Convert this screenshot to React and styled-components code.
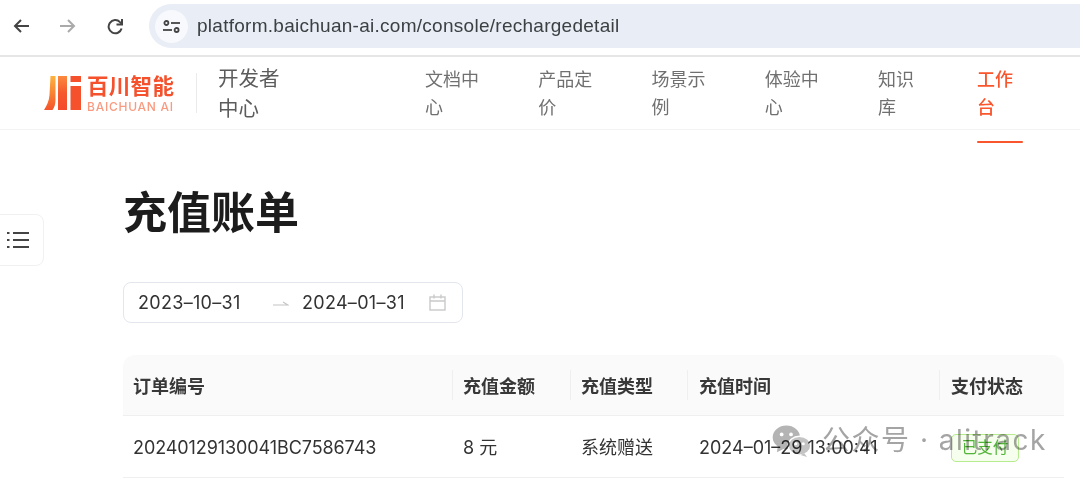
import React from "react";
import styled, { createGlobalStyle } from "styled-components";

const CJK = `"Inter", "Noto Sans CJK SC", sans-serif`;

const Global = createGlobalStyle`
  html, body { margin: 0; padding: 0; background: #fff; }
  body { font-family: ${CJK}; width: 1080px; height: 482px; overflow: hidden; }
  * { box-sizing: border-box; }
`;

const Page = styled.div`
  position: relative;
  width: 1080px;
  height: 482px;
  overflow: hidden;
`;

const BrowserBar = styled.div`
  height: 57px;
  display: flex;
  align-items: flex-start;
  padding: 4px 0 0 13px;
  border-bottom: 2px solid #e6e6e6;
`;

const BrowserButtons = styled.div`
  display: flex;
  gap: 31px;
  align-items: center;
  height: 44px;
  width: 136px;
`;

const UrlPill = styled.div`
  flex: 1;
  height: 44px;
  background: #e8edf6;
  border-radius: 22px 0 0 22px;
  display: flex;
  align-items: center;
  padding-left: 6px;
  gap: 9px;
`;

const SiteIcon = styled.div`
  width: 33px;
  height: 33px;
  border-radius: 50%;
  background: #f7f9fc;
  display: flex;
  align-items: center;
  justify-content: center;
`;

const UrlText = styled.span`
  font-family: "Liberation Sans", sans-serif;
  font-size: 19px;
  color: #3c4043;
  letter-spacing: 0.27px;
`;

const Nav = styled.nav`
  height: 73px;
  display: flex;
  align-items: center;
  padding-left: 44px;
  border-bottom: 1px solid #f3f3f3;
`;

const Brand = styled.div`
  display: flex;
  align-items: center;
  gap: 6px;
  width: 153px;
  height: 40px;
  border-right: 1px solid #ebebeb;
`;

const BrandText = styled.div`
  display: flex;
  flex-direction: column;
  align-items: flex-start;
`;

const BrandCn = styled.span`
  font-family: "Noto Sans CJK SC", sans-serif;
  font-size: 21.5px;
  font-weight: 700;
  line-height: 22px;
  letter-spacing: 0.3px;
  color: #f4512c;
`;

const BrandEn = styled.span`
  margin-top: 4px;
  font-family: "Inter", sans-serif;
  font-size: 12px;
  font-weight: 500;
  line-height: 13px;
  letter-spacing: 0.75px;
  color: #f89b80;
  white-space: nowrap;
`;

const DevCenter = styled.div`
  width: 64px;
  margin: 0 143px 2px 21px;
  font-family: "Noto Sans CJK SC", sans-serif;
  font-size: 20.5px;
  line-height: 30px;
  color: #5c5c5c;
`;

const NavItem = styled.a`
  position: relative;
  display: block;
  width: ${(p) => p.$text}px;
  margin-right: ${(p) => p.$gap}px;
  margin-bottom: 2px;
  font-family: "Noto Sans CJK SC", sans-serif;
  font-size: 18px;
  line-height: 28px;
  color: ${(p) => (p.$active ? "#f9562e" : "#707070")};
  font-weight: ${(p) => (p.$active ? 500 : 400)};
  ${(p) =>
    p.$active &&
    `&::after {
      content: "";
      position: absolute;
      left: 0;
      top: 77px;
      width: 46px;
      height: 2px;
      border-radius: 1px;
      background: #f9562e;
    }`}
`;

const SideToggle = styled.div`
  position: absolute;
  left: -8px;
  top: 214px;
  width: 52px;
  height: 52px;
  background: #fff;
  border: 1px solid #f1f1f1;
  border-radius: 8px;
  display: flex;
  align-items: center;
  justify-content: center;
`;

const Main = styled.main`
  padding: 47px 16px 0 123px;
`;

const Title = styled.h1`
  margin: 0;
  font-family: "Noto Sans CJK SC", sans-serif;
  font-size: 44px;
  line-height: 66px;
  font-weight: 700;
  color: #1c1c1c;
`;

const DatePicker = styled.div`
  margin-top: 39px;
  width: 340px;
  height: 41px;
  border: 1px solid #e4e6ee;
  border-radius: 8px;
  display: flex;
  align-items: center;
  padding: 0 15px 0 14px;
`;

const DateText = styled.span`
  width: ${(p) => p.$w}px;
  font-size: 18px;
  letter-spacing: 0.3px;
  color: #333;
  white-space: nowrap;
`;

const Arrow = styled.span`
  width: 29px;
  display: flex;
  margin-left: 31px;
  margin-top: 3px;
`;

const Table = styled.div`
  margin-top: 32px;
  width: 941px;
`;

const Row = styled.div`
  display: grid;
  grid-template-columns: 329px 118px 117px 252px 125px;
  align-items: center;
  height: ${(p) => p.$h}px;
  background: ${(p) => (p.$head ? "#fafafa" : "#fff")};
  border-bottom: 1px solid #efefef;
  border-radius: ${(p) => (p.$head ? "12px 12px 0 0" : "0")};
`;

const HeadCell = styled.div`
  position: relative;
  padding-left: ${(p) => p.$pad}px;
  font-family: "Noto Sans CJK SC", sans-serif;
  font-size: 18px;
  font-weight: 700;
  color: #383838;
  line-height: 28px;
  margin-bottom: 1px;
  &::before {
    content: ${(p) => (p.$first ? "none" : '""')};
    position: absolute;
    left: 0;
    top: -1px;
    height: 30px;
    width: 1px;
    background: #efefef;
  }
`;

const Cell = styled.div`
  padding-left: ${(p) => p.$pad}px;
  margin-top: 2px;
  font-size: 18px;
  letter-spacing: ${(p) => p.$ls || 0}px;
  color: #333;
  line-height: 28px;
  white-space: nowrap;
`;

const Badge = styled.span`
  display: inline-flex;
  align-items: center;
  justify-content: center;
  width: 68px;
  height: 28px;
  margin-top: 1px;
  background: #f6ffed;
  border: 1px solid #b7eb8f;
  border-radius: 5px;
  font-size: 15.5px;
  letter-spacing: 0;
  color: #52b53a;
`;

const Watermark = styled.div`
  position: absolute;
  left: 772px;
  top: 418px;
  display: flex;
  align-items: center;
  gap: 10px;
  height: 40px;
  color: #a4a4a4;
  white-space: nowrap;
  pointer-events: none;
  mix-blend-mode: multiply;
`;

const WatermarkText = styled.span`
  font-family: "Inter", "Noto Sans CJK SC", sans-serif;
  font-size: 28px;
  font-weight: 400;
  letter-spacing: 1.5px;
`;

const WeChatMark = styled.svg`
  margin-top: 6px;
`;

const Back = () => (
  <svg width="16" height="14" viewBox="0 0 16 14" fill="none" stroke="#444" strokeWidth="2">
    <path d="M16 7H2M8 1L2 7l6 6" />
  </svg>
);
const Forward = () => (
  <svg width="16" height="14" viewBox="0 0 16 14" fill="none" stroke="#aaa" strokeWidth="2">
    <path d="M0 7h14M8 1l6 6-6 6" />
  </svg>
);
const Reload = () => (
  <svg width="16" height="17" viewBox="0 0 16 17" fill="none" stroke="#444" strokeWidth="2">
    <path d="M14.6 10.5A6.6 6.6 0 1 1 13 4.1L15 6" />
    <path d="M15 1v5.5H9.5" />
  </svg>
);
const Tune = () => (
  <svg width="17" height="13" viewBox="0 0 17 13" fill="none" stroke="#444" strokeWidth="1.8">
    <circle cx="3.4" cy="3" r="2" />
    <path d="M8 3h9" />
    <circle cx="13.6" cy="10" r="2" />
    <path d="M0 10h9" />
  </svg>
);
const Mark = () => (
  <svg width="37" height="34" viewBox="0 0 37 34">
    <defs>
      <linearGradient id="mk" x1="0" y1="0" x2="0" y2="1">
        <stop offset="0" stopColor="#fdb33f" />
        <stop offset="1" stopColor="#f5532a" />
      </linearGradient>
      <linearGradient id="mk2" x1="0" y1="0" x2="0" y2="1">
        <stop offset="0" stopColor="#fb8a3e" />
        <stop offset="0.5" stopColor="#f5582c" />
        <stop offset="1" stopColor="#f4492a" />
      </linearGradient>
    </defs>
    <path d="M6.5 0h5v24c0 4-1 7-3 10H0c3-5 5-9 5.500-15z" fill="url(#mk)" />
    <path d="M14 0h9v34h-9z" fill="url(#mk2)" />
    <path d="M26.500 0H37v6H26.500zM26.500 10H37v24H26.500z" fill="#f4512c" />
  </svg>
);
const ListIcon = () => (
  <svg width="22" height="18" viewBox="0 0 22 18" fill="none" stroke="#444" strokeWidth="2">
    <path d="M6 2h16M6 9h16M6 16h16" />
    <path d="M0 2h2.5M0 9h2.5M0 16h2.5" />
  </svg>
);
const RangeArrow = () => (
  <svg width="16" height="8" viewBox="0 0 16 8" fill="none" stroke="#c4c4c4" strokeWidth="1.2">
    <path d="M0 5h15L10 2" />
  </svg>
);
const Calendar = () => (
  <svg width="17" height="17" viewBox="0 0 17 17" fill="none" stroke="#c9c9c9" strokeWidth="1.4">
    <rect x="1" y="3" width="15" height="13" />
    <path d="M1 7h15M5 0.5v4M12 0.5v4" />
  </svg>
);
const WeChat = () => (
  <WeChatMark width="40" height="32" viewBox="0 0 42 34">
    <ellipse cx="15" cy="13" rx="14.5" ry="12.500" fill="#b4b4b4" />
    <path d="M6 22l-1 7 8-4z" fill="#b4b4b4" />
    <ellipse cx="29" cy="22" rx="12" ry="10" fill="#c4c4c4" stroke="#fff" strokeWidth="1.5" />
    <path d="M34 30l3 4-7-2z" fill="#c4c4c4" />
    <circle cx="10" cy="10" r="2" fill="#fff" />
    <circle cx="20" cy="10" r="2" fill="#fff" />
    <circle cx="25" cy="20" r="1.6" fill="#fff" />
    <circle cx="33" cy="20" r="1.6" fill="#fff" />
  </WeChatMark>
);

const navItems = [
  ["文档中心", 54, 59.25],
  ["产品定价", 54, 59.25],
  ["场景示例", 54, 59.25],
  ["体验中心", 54, 59.25],
  ["知识库", 36, 63],
];

export default function App() {
  return (
    <Page>
      <Global />
      <BrowserBar>
        <BrowserButtons>
          <Back />
          <Forward />
          <Reload />
        </BrowserButtons>
        <UrlPill>
          <SiteIcon>
            <Tune />
          </SiteIcon>
          <UrlText>platform.baichuan-ai.com/console/rechargedetail</UrlText>
        </UrlPill>
      </BrowserBar>
      <Nav>
        <Brand>
          <Mark />
          <BrandText>
            <BrandCn>百川智能</BrandCn>
            <BrandEn>BAICHUAN AI</BrandEn>
          </BrandText>
        </Brand>
        <DevCenter>开发者中心</DevCenter>
        {navItems.map(([t, w, g]) => (
          <NavItem key={t} $text={w} $gap={g}>
            {t}
          </NavItem>
        ))}
        <NavItem $text={36} $gap={0} $active>
          工作台
        </NavItem>
      </Nav>
      <SideToggle>
        <ListIcon />
      </SideToggle>
      <Main>
        <Title>充值账单</Title>
        <DatePicker>
          <DateText $w={104}>2023–10–31</DateText>
          <Arrow>
            <RangeArrow />
          </Arrow>
          <DateText $w={127}>2024–01–31</DateText>
          <Calendar />
        </DatePicker>
        <Table>
          <Row $head $h={61}>
            <HeadCell $first $pad={10}>订单编号</HeadCell>
            <HeadCell $pad={11}>充值金额</HeadCell>
            <HeadCell $pad={11}>充值类型</HeadCell>
            <HeadCell $pad={12}>充值时间</HeadCell>
            <HeadCell $pad={12}>支付状态</HeadCell>
          </Row>
          <Row $h={62}>
            <Cell $pad={10} $ls={-0.09}>20240129130041BC7586743</Cell>
            <Cell $pad={11}>8 元</Cell>
            <Cell $pad={11}>系统赠送</Cell>
            <Cell $pad={12}>2024–01–29 13:00:41</Cell>
            <Cell $pad={12}>
              <Badge>已支付</Badge>
            </Cell>
          </Row>
        </Table>
      </Main>
      <Watermark>
        <WeChat />
        <WatermarkText>公众号 · alitrack</WatermarkText>
      </Watermark>
    </Page>
  );
}
